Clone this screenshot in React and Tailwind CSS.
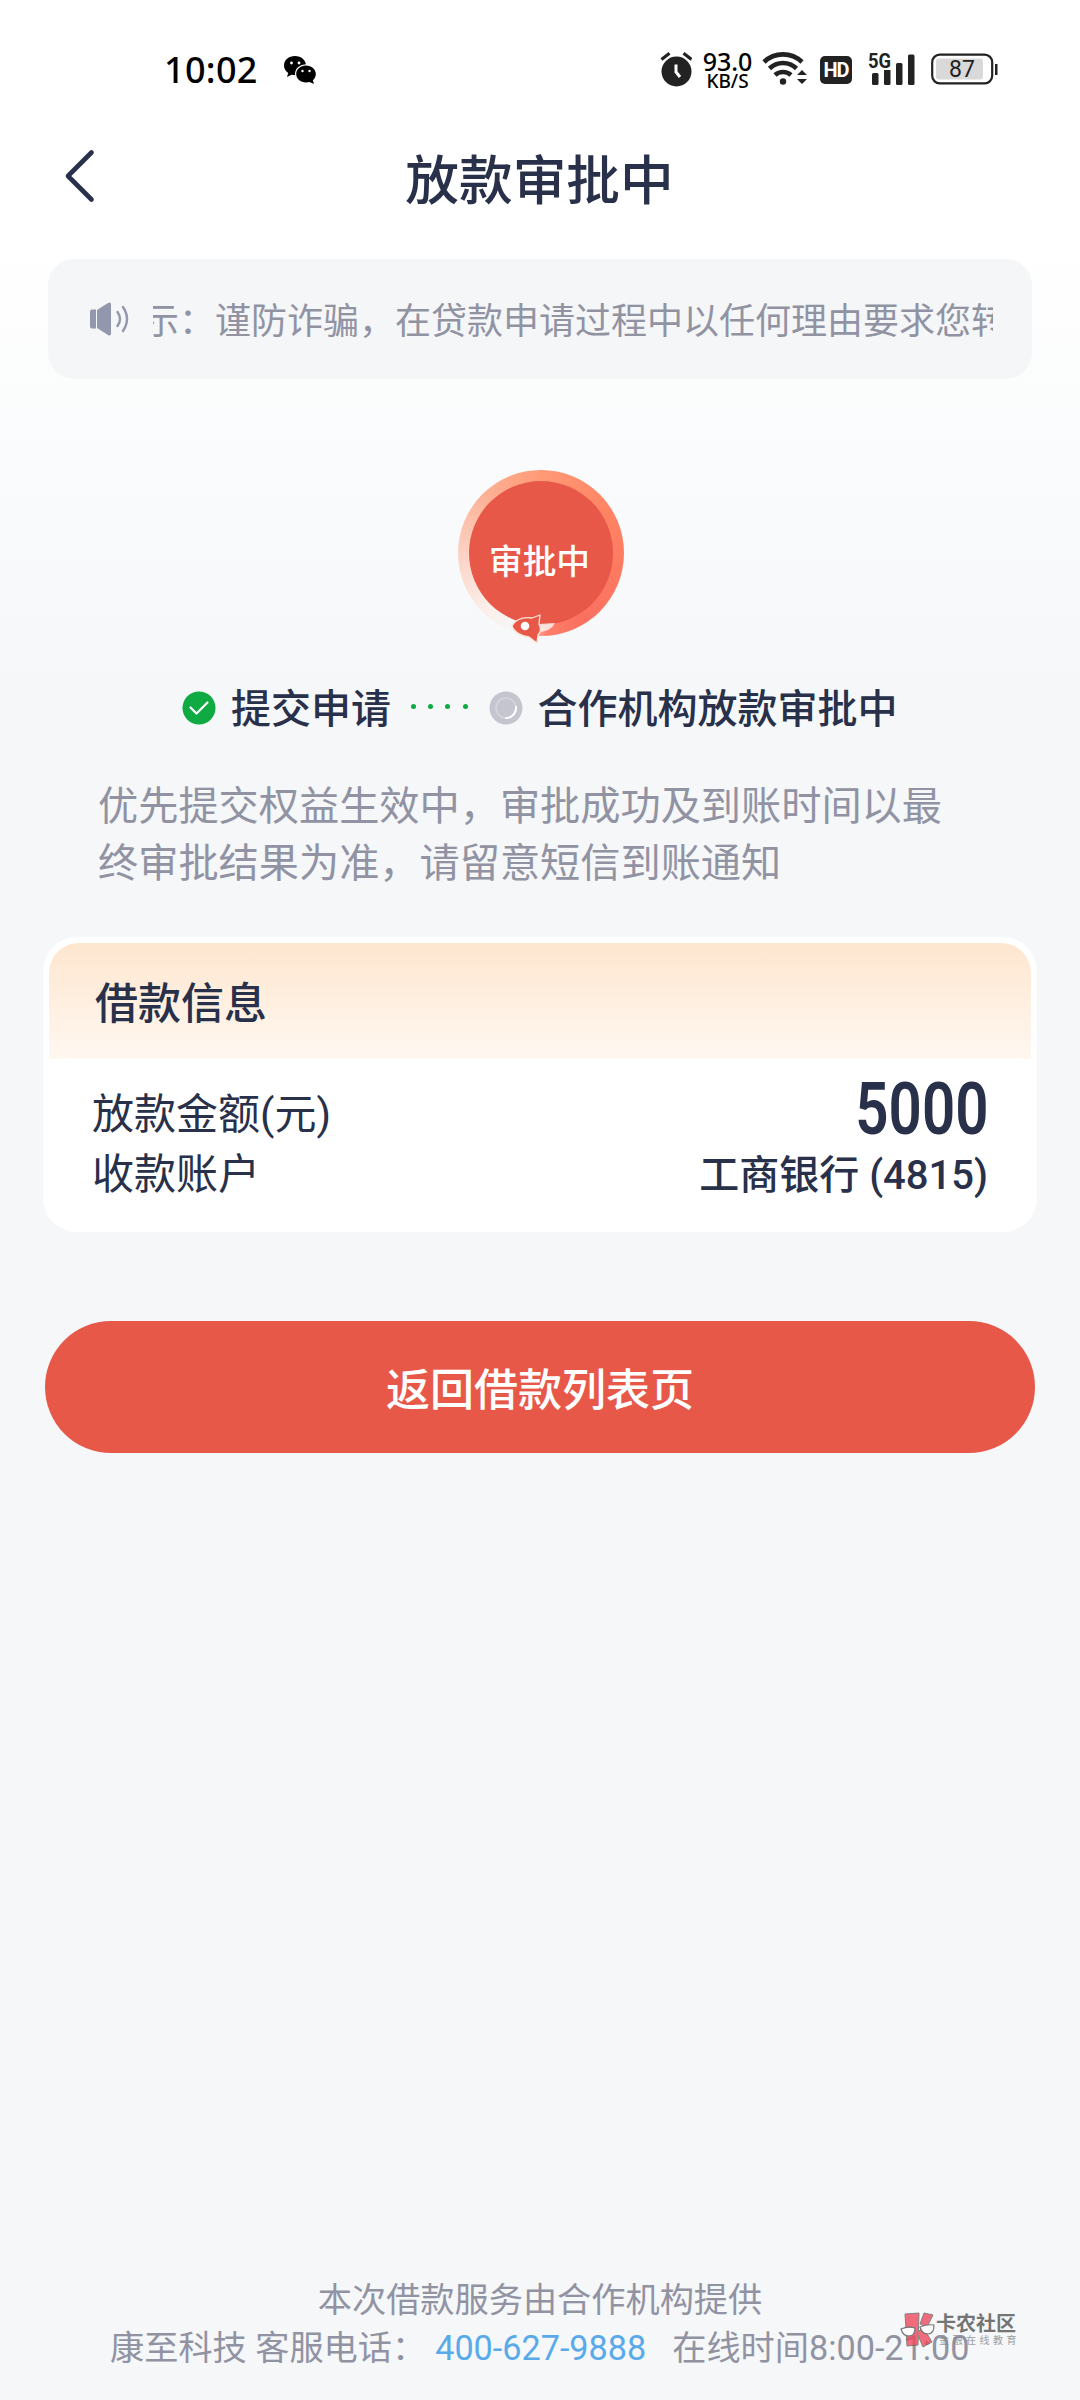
import React from "react";

const App = () => {
  return (
    <div className="relative w-[1080px] h-[2400px] overflow-hidden flex flex-col bg-[#f5f7f9] bg-[linear-gradient(180deg,#ffffff_0px,#ffffff_240px,#f5f7f9_700px)] font-[Roboto,'Noto_Sans_CJK_SC',sans-serif] text-[#28304a] whitespace-nowrap">
      <StatusBar />
      <Header title="放款审批中" />
      <Notice text="示：谨防诈骗，在贷款申请过程中以任何理由要求您转账" />

      <div className="h-[260px] pt-[88px] flex justify-center">
        <ApprovalBadge label="审批中" />
      </div>

      <Steps />

      <div className="mt-[35px] ml-[98px] text-[40.200px] leading-[57px] text-[#9193a3]">
        <p>优先提交权益生效中，审批成功及到账时间以最</p>
        <p>终审批结果为准，请留意短信到账通知</p>
      </div>

      <LoanCard />

      <button className="mt-[89px] mx-[45px] h-[132px] shrink-0 rounded-full bg-[#e75849] text-white text-[44px] font-medium pt-[7px]">
        返回借款列表页
      </button>

      <Footer />
      <Watermark />
    </div>
  );
};

export default App;

function StatusBar() {
  return (
    <div className="h-[138px] shrink-0 flex items-start justify-between pl-[164px] pr-[81px] pt-[48px]">
      <div className="flex items-center h-11">
        <span className="font-['Noto_Sans',sans-serif] text-[36px] leading-[44px] font-medium text-black tracking-[0.3px]">
          10:02
        </span>
        <svg className="ml-[25px]" width="34" height="30" viewBox="0 0 34 30">
          <path
            d="M12 1C5.600 1 1 5 1 10.500c0 3.200 1.700 5.800 4.200 7.600L4 22l4.600-2.300c1.100.3 2.200.4 3.400.4 6.200 0 11-4.100 11-9.500S18.200 1 12 1z"
            fill="black"
          />
          <ellipse cx="23" cy="19" rx="11" ry="9.800" fill="white" />
          <path
            d="M23 10.500c-5.600 0-9.800 3.700-9.800 8.500s4.200 8.500 9.800 8.500c1.200 0 2.400-.2 3.500-.5L31 29l-1.200-3.700c1.900-1.600 3-3.800 3-6.300 0-4.800-4.200-8.500-9.800-8.500z"
            fill="black"
          />
          <g fill="white">
            <circle cx="8.500" cy="8" r="1.400" />
            <circle cx="16" cy="8" r="1.400" />
            <circle cx="19.500" cy="16" r="1.200" />
            <circle cx="26.500" cy="16" r="1.200" />
          </g>
        </svg>
      </div>

      <div className="flex items-center h-11">
        {/* Alarm */}
        <svg className="-mt-[2px]" width="32" height="36" viewBox="0 0 32 36">
          <circle cx="16.500" cy="20.500" r="15" fill="#222" />
          <path
            d="M1.500 8.500L9.500 2.300M31.500 8.500L23.500 2.300"
            stroke="#222"
            strokeWidth="3.200"
          />
          <path
            d="M16 13.500v7.500l4 5"
            stroke="white"
            strokeWidth="3"
            fill="none"
          />
        </svg>

        <div className="ml-[10px] w-[51px] flex flex-col items-center font-['Noto_Sans',sans-serif] text-black">
          <span className="text-[25px] leading-[23px] font-medium">93.0</span>
          <span className="text-[19px] leading-[17px] font-medium">KB/S</span>
        </div>

        {/* Wifi */}
        <svg
          className="ml-[9px] -mt-[4px]"
          width="46"
          height="36"
          viewBox="0 0 46 36"
        >
          <g stroke="#222" strokeWidth="4.600" fill="none">
            <path d="M2 12a27.500 27.500 0 0 1 38 0" />
            <path d="M7.500 18.500a19.500 19.500 0 0 1 27 0" />
            <path d="M13 25a12 12 0 0 1 16 0" />
          </g>
          <circle cx="21" cy="31.500" r="3.200" fill="#222" />
          <path d="M35 25h10l-5-5zM35 29h10l-5 5z" fill="#222" />
        </svg>

        <div className="ml-[12px] w-8 h-7 rounded-[5px] bg-[#222] text-white text-[20px] leading-[28px] font-bold text-center tracking-[-1px]">
          HD
        </div>

        {/* 5G signal */}
        <svg
          className="ml-[16px] -mt-[4px]"
          width="48"
          height="36"
          viewBox="0 0 48 36"
        >
          <g fill="#222">
            <rect x="4" y="23" width="6.500" height="12" rx="1.500" />
            <rect x="16" y="19" width="6.500" height="16" rx="1.500" />
            <rect x="28" y="13" width="6.500" height="22" rx="1.500" />
            <rect x="40" y="4.500" width="6.500" height="30.500" rx="1.500" />
          </g>
          <rect x="0" y="2" width="23" height="18" fill="white" />
          <text
            x="0"
            y="17.500"
            fontSize="20"
            fontWeight="700"
            fill="#222"
            textLength="23"
            lengthAdjust="spacingAndGlyphs"
          >
            5G
          </text>
        </svg>

        {/* Battery */}
        <svg
          className="ml-[15px] -mt-[2px]"
          width="68"
          height="32"
          viewBox="0 0 68 32"
        >
          <rect
            x="1.200"
            y="1.700"
            width="60"
            height="28.600"
            rx="7.500"
            fill="white"
            stroke="#222"
            strokeWidth="2.200"
          />
          <rect x="5" y="5.500" width="47" height="21" rx="3" fill="#d9d9d9" />
          <rect x="64" y="11" width="2.500" height="11" fill="#222" />
          <text x="31" y="24" fontSize="23" fill="#222" textAnchor="middle">
            87
          </text>
        </svg>
      </div>
    </div>
  );
}

function Header({ title }) {
  return (
    <div className="h-[121px] shrink-0 flex items-start pl-[62px]">
      <svg className="mt-[10px]" width="34" height="56" viewBox="0 0 34 56">
        <path
          d="M29.500 4.500L6 28l23.500 23.500"
          stroke="#28304a"
          strokeWidth="4.600"
          strokeLinecap="round"
          strokeLinejoin="round"
          fill="none"
        />
      </svg>
      <h1 className="flex-1 pr-[97px] text-center text-[53.700px] leading-[88px] font-medium">
        {title}
      </h1>
    </div>
  );
}

function Notice({ text }) {
  return (
    <div className="mx-12 h-[120px] shrink-0 rounded-[26px] bg-[#f5f6f8] flex items-center pl-[41px]">
      <svg width="42" height="34" viewBox="0 0 42 34">
        <path d="M1 9.500q0-2 2-2h4v19H3q-2 0-2-2z" fill="#9297ad" />
        <path
          d="M8 8l11-7q3-1.500 3 1.500v29q0 3-3 1.500L8 26z"
          fill="#9297ad"
        />
        <path
          d="M28.500 10q5 7 0 14M34 5q8 12 0 24"
          stroke="#9297ad"
          strokeWidth="2.400"
          strokeLinecap="round"
          fill="none"
        />
      </svg>
      <div className="ml-[22px] w-[840px] overflow-hidden">
        {/* Scrolling line, caught part of the way through */}
        <p className="-ml-[10px] pt-[5px] text-[36px] leading-[52px] text-[#9193a3]">
          {text}
        </p>
      </div>
    </div>
  );
}

function ApprovalBadge({ label }) {
  return (
    <div className="relative w-[170px] h-[176px]">
      <div className="absolute left-[3px] top-[3px] w-[166px] h-[166px] rounded-full bg-[conic-gradient(from_0deg,#ff9a76_0deg,#ff8363_60deg,#fb7060_150deg,#ff7f6a_176deg,#f5f7f9_196deg,#fbeeea_225deg,#fcd2c4_270deg,#fcb296_315deg,#ff9a76_360deg)]" />
      <div className="absolute left-[14px] top-[14px] w-[144px] h-[144px] rounded-full bg-[#e75849] flex items-center justify-center">
        <span className="pt-[20px] pr-[3px] text-[33.700px] leading-[40px] font-medium text-white">
          {label}
        </span>
      </div>
      <svg
        className="absolute left-[44px] top-[144px]"
        width="64"
        height="34"
        viewBox="0 0 64 34"
      >
        <path d="M40 13l16-1q-4 9-18 9z" fill="#fff" opacity=".75" />
        <path
          d="M13 15C17 8 25 6 33 7l8-3-1 9c2 4 2 8-1 11l-1 8-8-6C22 25 15 21 13 15z"
          fill="#e75849"
          stroke="#fde3d5"
          strokeWidth="1.300"
          strokeLinejoin="round"
        />
        <circle cx="26" cy="15" r="4.300" fill="#fff" />
      </svg>
    </div>
  );
}

function Steps() {
  return (
    <div className="h-[70px] mt-[34px] shrink-0 flex items-center pl-[182px] text-[40px] font-medium">
      <svg width="34" height="34" viewBox="0 0 34 34">
        <circle cx="17" cy="17" r="16.500" fill="#0faa41" />
        <path
          d="M8.500 16.500l6 6 11-11"
          stroke="white"
          strokeWidth="2.200"
          strokeLinecap="round"
          strokeLinejoin="round"
          fill="none"
        />
      </svg>
      <span className="ml-[15px] pt-[4px]">提交申请</span>
      <div className="ml-5 -mt-1 flex gap-[12.200px]">
        {[0, 1, 2, 3].map((i) => (
          <span key={i} className="w-[5px] h-[5px] rounded-full bg-[#0faa41]" />
        ))}
      </div>
      <svg
        className="ml-[21px] -mt-px"
        width="34"
        height="34"
        viewBox="0 0 34 34"
      >
        <circle cx="17" cy="17" r="16.500" fill="#c5c5cf" />
        <circle
          cx="17"
          cy="17"
          r="10"
          stroke="#d6d6de"
          strokeWidth="1.500"
          fill="none"
        />
        <path
          d="M27 16a10 10 0 0 1-10 11"
          stroke="white"
          strokeWidth="2"
          strokeLinecap="round"
          fill="none"
        />
      </svg>
      <span className="ml-[15px] pt-[4px]">合作机构放款审批中</span>
    </div>
  );
}

function LoanCard() {
  return (
    <div className="mt-[45px] mx-[43px] h-[295px] shrink-0 rounded-[34px] bg-white p-[6px]">
      <div className="h-[116px] rounded-t-[30px] bg-linear-to-b from-[#fee6cf] to-[#fff8f1] pl-[46px] text-[43px] leading-[122px] font-medium">
        借款信息
      </div>
      <div className="pl-[43px] pr-[42px] pt-[25px]">
        <div className="h-[60px] flex justify-between items-center">
          <span className="text-[42px]">放款金额(元)</span>
          <span className="origin-right scale-x-[0.81] -mt-[8px] text-[72px] leading-[60px] font-semibold">
            5000
          </span>
        </div>
        <div className="h-[60px] flex justify-between items-center">
          <span className="pt-px text-[42px]">收款账户</span>
          <span className="pt-[3px] pr-px text-[40px] font-medium">
            工商银行 (4815)
          </span>
        </div>
      </div>
    </div>
  );
}

function Footer() {
  return (
    <div className="mt-auto mb-[28px] text-[34.200px] leading-[48px] text-[#9193a3]">
      <p className="text-center">本次借款服务由合作机构提供</p>
      <p className="pl-[110px] flex">
        <span>康至科技 客服电话：</span>
        <span className="ml-[9px] text-[#5aaaea]">400-627-9888</span>
        <span className="ml-[26px]">在线时间8:00-21:00</span>
      </p>
    </div>
  );
}

function Watermark() {
  return (
    <div className="absolute left-[900px] top-[2311px] flex opacity-80">
      <svg width="36" height="38" viewBox="0 0 36 38">
        <g fill="#f0495c" stroke="#666" strokeWidth="1">
          <path d="M5 3l14-1-1 32-11 1z" />
          <path d="M20 13l4-11 9 2-6 12z" />
          <path d="M17 22l6-6 9 15-9 5z" />
        </g>
        <g fill="white" stroke="#555" strokeWidth="1.200">
          <path d="M1 18q7-3 14-1 0 8-6 8-6 0-8-7z" />
          <path d="M20 16q7-3 14-2 0 9-6 9-6 0-8-7z" />
        </g>
      </svg>
      <div className="pt-[3px] flex flex-col text-[#555]">
        <span className="text-[20px] leading-[20px] font-bold">卡农社区</span>
        <span className="pl-[3px] text-[10px] leading-[14px] tracking-[3.500px] text-[#888]">
          金融在线教育
        </span>
      </div>
    </div>
  );
}
